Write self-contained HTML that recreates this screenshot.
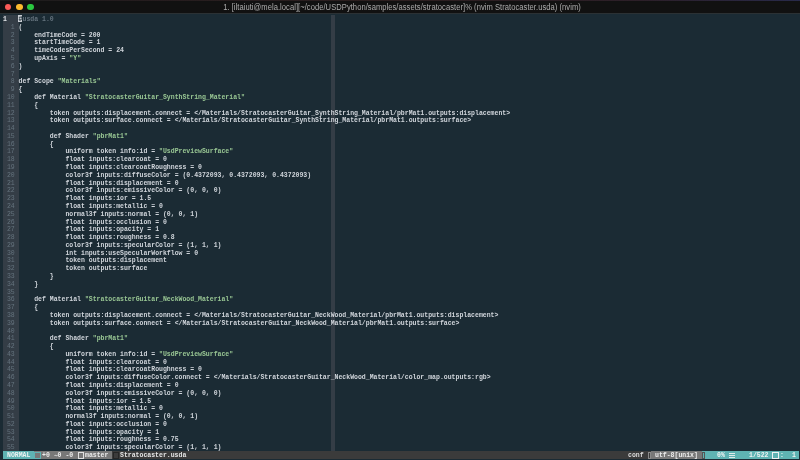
<!DOCTYPE html>
<html><head><meta charset="utf-8"><style>
*{margin:0;padding:0}
html,body{width:800px;height:460px;overflow:hidden;background:#1b2b34}
body{position:relative;font-family:"Liberation Mono",monospace}
#tb{position:absolute;left:0;top:0;width:800px;height:12.5px;background:#111111}
#tt{position:absolute;left:1.6px;top:0;width:800px;height:12.5px;text-align:center;font-family:"Liberation Sans",sans-serif;font-size:7.6px;letter-spacing:0.04px;line-height:12.5px;padding-top:1.9px;color:#acacac;will-change:transform;transform:scaleY(1.2);transform-origin:50% 10px;white-space:nowrap}
.dot{position:absolute;top:3.75px;width:6.5px;height:6.5px;border-radius:50%}
#gut{position:absolute;left:2.83px;top:15.1px;width:16.020px;height:435.96px;background:#343d46}
#cc{position:absolute;left:330.850px;top:15.1px;width:3.905px;height:435.96px;background:#343d46}
.r{position:absolute;left:2.83px;height:7.785px;line-height:7.785px;padding-top:0.6px;font-weight:bold;will-change:transform;font-size:6.508px;white-space:pre;color:#d0d5db}
.r i,.r b,.r u{font-style:normal;text-decoration:none}
.ln{color:#65737e;font-weight:normal;position:relative;top:0.7px}
.cn{color:#e0e4e8;position:relative;top:0.7px}
.s{color:#99c794}
.c{color:#65737e}
.cur{color:#1b2b34}
#st{position:absolute;left:2.83px;top:451.06px;width:796.620px;height:7.785px;background:#3b3b3b}
.sb{position:absolute;top:0;height:7.785px}
.st{position:absolute;top:0;padding-top:1.2px;line-height:7.785px;font-size:6.508px;white-space:pre;will-change:transform}
.bx{position:absolute;top:0.8px;height:7.0px;box-sizing:border-box;border:0.6px solid}
</style></head><body>
<div id="tb"></div><div style="position:absolute;left:0;top:0;width:800px;height:0.9px;background:linear-gradient(90deg,#1c1c1c 0%,#241c1e 15%,#2e2020 50%,#2c1f28 80%,#282a4a 100%)"></div><div style="position:absolute;left:0;top:12.5px;width:800px;height:1.1px;background:#2b3134"></div>
<div class="dot" style="left:4.75px;background:#fc5b57"></div>
<div class="dot" style="left:16px;background:#fdbb2e"></div>
<div class="dot" style="left:27.25px;background:#2ac840"></div>
<div id="tt">1. [iltaiuti@mela.local][~/code/USDPython/samples/assets/stratocaster]% (nvim Stratocaster.usda) (nvim)</div>
<div id="gut"></div>
<div id="cc"></div>
<div id="cblk" style="position:absolute;left:18.450px;top:15.20px;width:3.905px;height:7.00px;background:#c8ccd2"></div><div class="r" style="top:15.10px"><i class="cn">1   </i><u class="cur">#</u><b class="c">usda 1.0</b></div><div class="r" style="top:22.88px"><i class="ln">  1 </i>(</div><div class="r" style="top:30.67px"><i class="ln">  2 </i>    endTimeCode = 200</div><div class="r" style="top:38.45px"><i class="ln">  3 </i>    startTimeCode = 1</div><div class="r" style="top:46.24px"><i class="ln">  4 </i>    timeCodesPerSecond = 24</div><div class="r" style="top:54.02px"><i class="ln">  5 </i>    upAxis = <b class="s">&quot;Y&quot;</b></div><div class="r" style="top:61.81px"><i class="ln">  6 </i>)</div><div class="r" style="top:69.59px"><i class="ln">  7 </i></div><div class="r" style="top:77.38px"><i class="ln">  8 </i>def Scope <b class="s">&quot;Materials&quot;</b></div><div class="r" style="top:85.16px"><i class="ln">  9 </i>{</div><div class="r" style="top:92.95px"><i class="ln"> 10 </i>    def Material <b class="s">&quot;StratocasterGuitar_SynthString_Material&quot;</b></div><div class="r" style="top:100.73px"><i class="ln"> 11 </i>    {</div><div class="r" style="top:108.52px"><i class="ln"> 12 </i>        token outputs:displacement.connect = &lt;/Materials/StratocasterGuitar_SynthString_Material/pbrMat1.outputs:displacement&gt;</div><div class="r" style="top:116.30px"><i class="ln"> 13 </i>        token outputs:surface.connect = &lt;/Materials/StratocasterGuitar_SynthString_Material/pbrMat1.outputs:surface&gt;</div><div class="r" style="top:124.09px"><i class="ln"> 14 </i></div><div class="r" style="top:131.88px"><i class="ln"> 15 </i>        def Shader <b class="s">&quot;pbrMat1&quot;</b></div><div class="r" style="top:139.66px"><i class="ln"> 16 </i>        {</div><div class="r" style="top:147.44px"><i class="ln"> 17 </i>            uniform token info:id = <b class="s">&quot;UsdPreviewSurface&quot;</b></div><div class="r" style="top:155.23px"><i class="ln"> 18 </i>            float inputs:clearcoat = 0</div><div class="r" style="top:163.01px"><i class="ln"> 19 </i>            float inputs:clearcoatRoughness = 0</div><div class="r" style="top:170.80px"><i class="ln"> 20 </i>            color3f inputs:diffuseColor = (0.4372093, 0.4372093, 0.4372093)</div><div class="r" style="top:178.59px"><i class="ln"> 21 </i>            float inputs:displacement = 0</div><div class="r" style="top:186.37px"><i class="ln"> 22 </i>            color3f inputs:emissiveColor = (0, 0, 0)</div><div class="r" style="top:194.16px"><i class="ln"> 23 </i>            float inputs:ior = 1.5</div><div class="r" style="top:201.94px"><i class="ln"> 24 </i>            float inputs:metallic = 0</div><div class="r" style="top:209.72px"><i class="ln"> 25 </i>            normal3f inputs:normal = (0, 0, 1)</div><div class="r" style="top:217.51px"><i class="ln"> 26 </i>            float inputs:occlusion = 0</div><div class="r" style="top:225.29px"><i class="ln"> 27 </i>            float inputs:opacity = 1</div><div class="r" style="top:233.08px"><i class="ln"> 28 </i>            float inputs:roughness = 0.8</div><div class="r" style="top:240.87px"><i class="ln"> 29 </i>            color3f inputs:specularColor = (1, 1, 1)</div><div class="r" style="top:248.65px"><i class="ln"> 30 </i>            int inputs:useSpecularWorkflow = 0</div><div class="r" style="top:256.44px"><i class="ln"> 31 </i>            token outputs:displacement</div><div class="r" style="top:264.22px"><i class="ln"> 32 </i>            token outputs:surface</div><div class="r" style="top:272.01px"><i class="ln"> 33 </i>        }</div><div class="r" style="top:279.79px"><i class="ln"> 34 </i>    }</div><div class="r" style="top:287.58px"><i class="ln"> 35 </i></div><div class="r" style="top:295.36px"><i class="ln"> 36 </i>    def Material <b class="s">&quot;StratocasterGuitar_NeckWood_Material&quot;</b></div><div class="r" style="top:303.15px"><i class="ln"> 37 </i>    {</div><div class="r" style="top:310.93px"><i class="ln"> 38 </i>        token outputs:displacement.connect = &lt;/Materials/StratocasterGuitar_NeckWood_Material/pbrMat1.outputs:displacement&gt;</div><div class="r" style="top:318.72px"><i class="ln"> 39 </i>        token outputs:surface.connect = &lt;/Materials/StratocasterGuitar_NeckWood_Material/pbrMat1.outputs:surface&gt;</div><div class="r" style="top:326.50px"><i class="ln"> 40 </i></div><div class="r" style="top:334.29px"><i class="ln"> 41 </i>        def Shader <b class="s">&quot;pbrMat1&quot;</b></div><div class="r" style="top:342.07px"><i class="ln"> 42 </i>        {</div><div class="r" style="top:349.86px"><i class="ln"> 43 </i>            uniform token info:id = <b class="s">&quot;UsdPreviewSurface&quot;</b></div><div class="r" style="top:357.64px"><i class="ln"> 44 </i>            float inputs:clearcoat = 0</div><div class="r" style="top:365.43px"><i class="ln"> 45 </i>            float inputs:clearcoatRoughness = 0</div><div class="r" style="top:373.21px"><i class="ln"> 46 </i>            color3f inputs:diffuseColor.connect = &lt;/Materials/StratocasterGuitar_NeckWood_Material/color_map.outputs:rgb&gt;</div><div class="r" style="top:381.00px"><i class="ln"> 47 </i>            float inputs:displacement = 0</div><div class="r" style="top:388.78px"><i class="ln"> 48 </i>            color3f inputs:emissiveColor = (0, 0, 0)</div><div class="r" style="top:396.57px"><i class="ln"> 49 </i>            float inputs:ior = 1.5</div><div class="r" style="top:404.35px"><i class="ln"> 50 </i>            float inputs:metallic = 0</div><div class="r" style="top:412.14px"><i class="ln"> 51 </i>            normal3f inputs:normal = (0, 0, 1)</div><div class="r" style="top:419.92px"><i class="ln"> 52 </i>            float inputs:occlusion = 0</div><div class="r" style="top:427.71px"><i class="ln"> 53 </i>            float inputs:opacity = 1</div><div class="r" style="top:435.49px"><i class="ln"> 54 </i>            float inputs:roughness = 0.75</div><div class="r" style="top:443.28px"><i class="ln"> 55 </i>            color3f inputs:specularColor = (1, 1, 1)</div>
<div id="st"><div class="sb" style="left:0.000px;width:31.240px;background:#5fb3b3"></div><div class="sb" style="left:31.240px;width:78.100px;background:#787878"></div><div class="sb" style="left:648.230px;width:50.765px;background:#787878"></div><div class="sb" style="left:698.995px;width:96.975px;background:#5fb3b3"></div><div class="st" style="left:3.905px;color:#eef2f2;font-weight:bold">NORMAL</div><div class="bx" style="left:31.570px;width:7.100px;border-color:#5fb3b3"></div><div class="st" style="left:39.050px;color:#ececec;font-weight:bold">+0  0 -0</div><svg style="position:absolute;left:50.765px;top:2.6px" width="4" height="3" viewBox="0 0 4 3"><path d="M0.3 2.0 Q1.1 0.6 2.0 1.5 T3.7 1.0" fill="none" stroke="#ececec" stroke-width="0.75"/></svg><div class="bx" style="left:75.170px;width:6.200px;border-color:#e0e0e0"></div><div class="st" style="left:82.005px;color:#ececec;font-weight:bold">master</div><div class="bx" style="left:110.370px;width:5.800px;border-color:#262626"></div><div class="st" style="left:117.150px;color:#e6e6e6;font-weight:bold">Stratocaster.usda</div><div class="st" style="left:624.800px;color:#dcdcdc;font-weight:bold">conf</div><div class="bx" style="left:644.770px;width:3.200px;border-color:#8a8a8a"></div><div class="st" style="left:652.135px;color:#ececec;font-weight:bold">utf-8[unix]</div><div class="bx" style="left:699.370px;width:2.600px;border-color:#555"></div><div class="st" style="left:714.615px;color:#eef2f2;font-weight:bold">0%</div><div style="position:absolute;left:726.370px;top:2.3px;width:5.4px;height:4.4px;border-top:0.8px solid #dfeaea;border-bottom:0.8px solid #dfeaea;box-sizing:border-box"></div><div style="position:absolute;left:726.370px;top:4.1px;width:5.4px;height:0.8px;background:#dfeaea"></div><div class="st" style="left:745.855px;color:#eef2f2;font-weight:bold">1/522</div><div class="bx" style="left:769.570px;width:6.500px;border-color:#eef2f2"></div><div class="st" style="left:777.095px;color:#eef2f2;font-weight:bold">:</div><div class="st" style="left:788.810px;color:#eef2f2;font-weight:bold">1</div></div>
</body></html>
